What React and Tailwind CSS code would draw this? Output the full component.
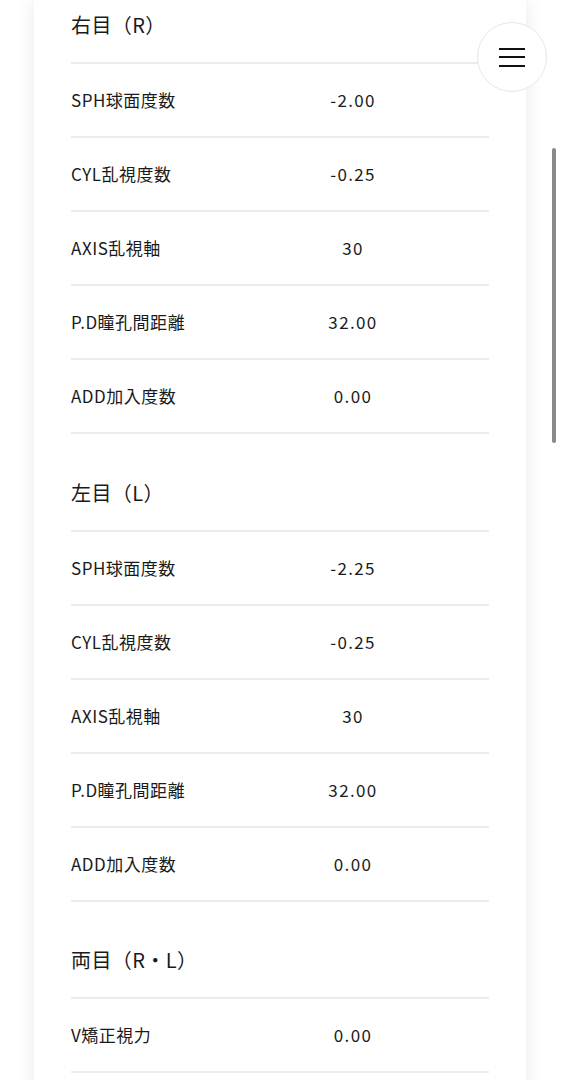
const sections = [
  {
    id: 'right',
    title: '右目（R）',
    rows: [
      { label: 'SPH球面度数', value: '-2.00' },
      { label: 'CYL乱視度数', value: '-0.25' },
      { label: 'AXIS乱視軸', value: '30' },
      { label: 'P.D瞳孔間距離', value: '32.00' },
      { label: 'ADD加入度数', value: '0.00' },
    ],
  },
  {
    id: 'left',
    title: '左目（L）',
    rows: [
      { label: 'SPH球面度数', value: '-2.25' },
      { label: 'CYL乱視度数', value: '-0.25' },
      { label: 'AXIS乱視軸', value: '30' },
      { label: 'P.D瞳孔間距離', value: '32.00' },
      { label: 'ADD加入度数', value: '0.00' },
    ],
  },
  {
    id: 'both',
    title: '両目（R・L）',
    rows: [{ label: 'V矯正視力', value: '0.00' }],
  },
];

const App = () => {
  return (
    <div
      className="relative min-h-[1080px] overflow-hidden bg-white text-[#1a1a1a]"
      style={{ fontFamily: '"Noto Sans CJK JP", "Noto Sans", sans-serif' }}
    >
      <div className="ml-[34px] w-[492px] bg-white px-[37px] pb-10 shadow-[0_0_18px_rgba(0,0,0,0.09)]">
        {sections.map((section, i) => (
          <section key={section.id}>
            <h2
              className={`border-b-2 border-[#ececec] pb-[22px] text-[20px] leading-[30px] tracking-[0.02em] ${
                i === 0 ? 'pt-[10px]' : 'pt-[43.5px]'
              }`}
            >
              {section.title}
            </h2>
            {section.rows.map((row) => (
              <div
                key={row.label}
                className="flex h-[74px] items-center border-b-2 border-[#ececec] text-[17px]"
              >
                <span className="w-[210px] tracking-[0.03em]">{row.label}</span>
                <span className="w-[142px] pl-[2px] text-center tracking-[0.08em]">{row.value}</span>
              </div>
            ))}
          </section>
        ))}
      </div>

      <button
        type="button"
        aria-label="menu"
        className="absolute left-[477px] top-[22px] flex h-[70px] w-[70px] flex-col items-center justify-center gap-[6.5px] rounded-full border border-[#e6e6e6] bg-white"
      >
        <span className="block h-[2px] w-[26px] bg-[#111]" />
        <span className="block h-[2px] w-[26px] bg-[#111]" />
        <span className="block h-[2px] w-[26px] bg-[#111]" />
      </button>

      <div className="absolute right-[5px] top-[148px] h-[295px] w-[4px] rounded-full bg-[#8a8a8a]" />
    </div>
  );
};

export default App;
